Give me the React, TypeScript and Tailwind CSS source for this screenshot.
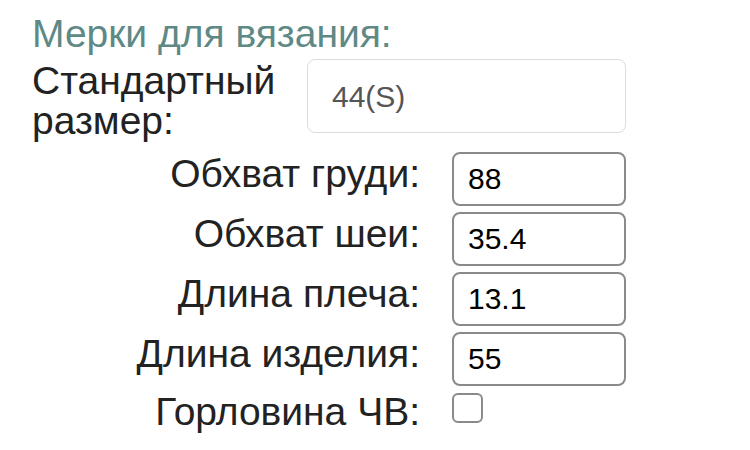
import React from "react";

const fields = [
  { label: "Обхват груди:", value: "88" },
  { label: "Обхват шеи:", value: "35.4" },
  { label: "Длина плеча:", value: "13.1" },
  { label: "Длина изделия:", value: "55" },
];

export default function App() {
  return (
    <div className="w-[750px] h-[450px] bg-white pl-8 pt-3 font-['Liberation_Sans',Arial,sans-serif] text-[#222]">
      <h1 className="text-[39px] leading-[44px] text-[#5e8985]">Мерки для вязания:</h1>

      <div className="flex items-start mt-[3px]">
        <label className="w-[275px] pt-[2px] text-[39px] leading-[40px]">
          Стандартный
          <br />
          размер:
        </label>
        <div className="w-[319px] h-[74px] flex items-center px-6 border-[1.5px] border-[#dcdcdc] rounded-lg text-[30px] text-[#555]">
          44(S)
        </div>
      </div>

      <div className="grid grid-cols-[388px_174px] gap-x-8 gap-y-[6px] mt-[11px]">
        {fields.map((f) => (
          <React.Fragment key={f.label}>
            <label className="pt-[2px] text-right text-[39px] leading-[40px]">{f.label}</label>
            <input
              readOnly
              value={f.value}
              className="h-[54px] w-[174px] px-[14px] border-2 border-[#8a8a8a] rounded-lg text-[30px] text-black outline-none"
            />
          </React.Fragment>
        ))}
        <label className="text-right text-[39px] leading-[40px]">Горловина ЧВ:</label>
        <div className="flex items-start pt-[1px]">
          <span className="block w-[31px] h-[30px] border-2 border-[#8a8a8a] rounded-md" />
        </div>
      </div>
    </div>
  );
}
